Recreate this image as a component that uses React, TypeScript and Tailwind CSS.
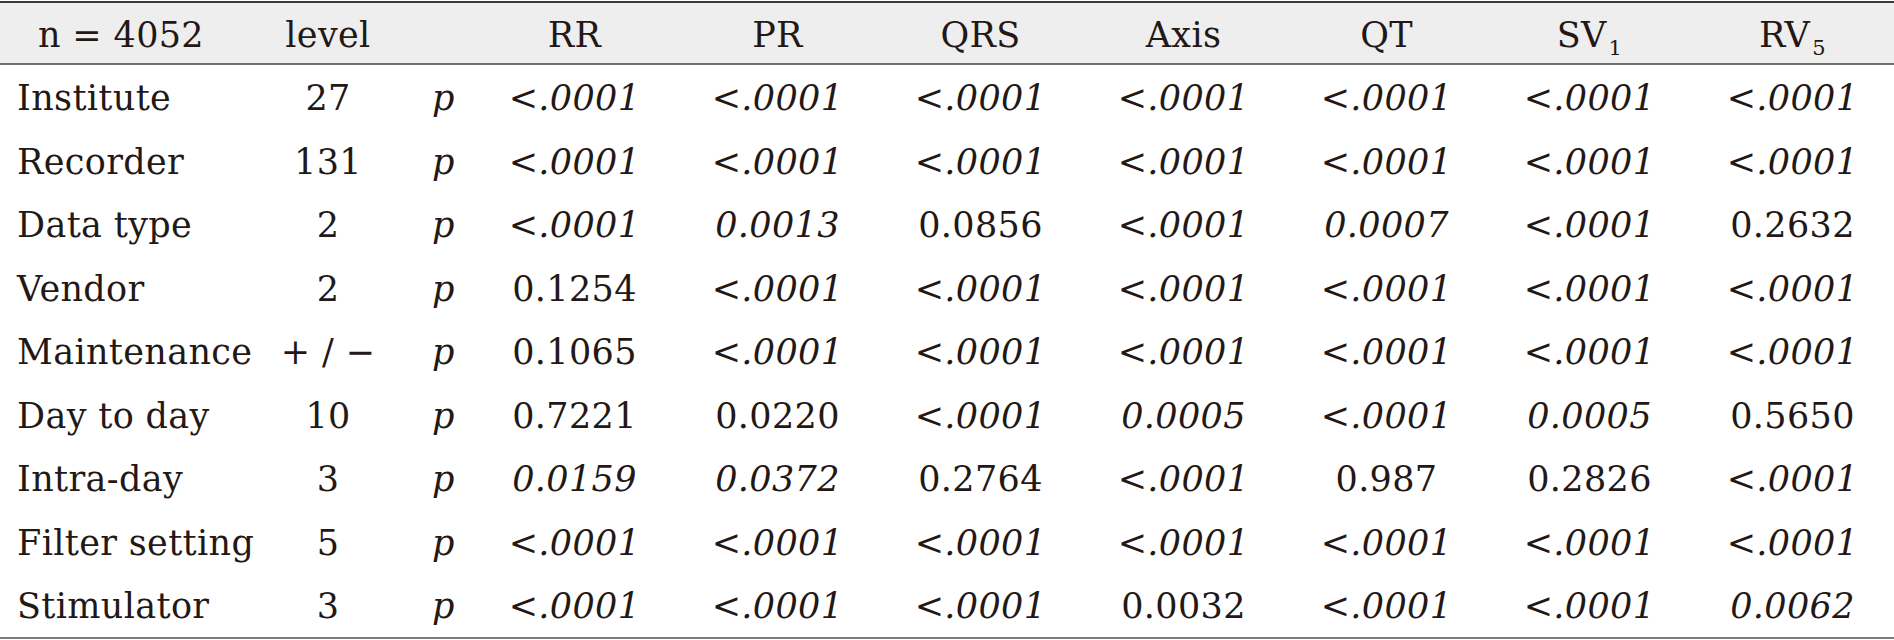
import React from 'react'

type Row = {
  label: string
  level: string
  values: string[]
  upright?: number[]
}

const LT = '<.0001'

const ROWS: Row[] = [
  { label: 'Institute', level: '27', values: [LT, LT, LT, LT, LT, LT, LT] },
  { label: 'Recorder', level: '131', values: [LT, LT, LT, LT, LT, LT, LT] },
  { label: 'Data type', level: '2', values: [LT, '0.0013', '0.0856', LT, '0.0007', LT, '0.2632'], upright: [2, 6] },
  { label: 'Vendor', level: '2', values: ['0.1254', LT, LT, LT, LT, LT, LT], upright: [0] },
  { label: 'Maintenance', level: '+ / −', values: ['0.1065', LT, LT, LT, LT, LT, LT], upright: [0] },
  { label: 'Day to day', level: '10', values: ['0.7221', '0.0220', LT, '0.0005', LT, '0.0005', '0.5650'], upright: [0, 1, 6] },
  { label: 'Intra-day', level: '3', values: ['0.0159', '0.0372', '0.2764', LT, '0.987', '0.2826', LT], upright: [2, 4, 5] },
  { label: 'Filter setting', level: '5', values: [LT, LT, LT, LT, LT, LT, LT] },
  { label: 'Stimulator', level: '3', values: [LT, LT, LT, '0.0032', LT, LT, '0.0062'], upright: [3] },
]

function Sub({ children }: { children: React.ReactNode }) {
  return <span className="relative top-[8px] ml-[2px] text-[21px] leading-none">{children}</span>
}

const HEAD: React.ReactNode[] = [
  'RR',
  'PR',
  'QRS',
  'Axis',
  'QT',
  <>SV<Sub>1</Sub></>,
  <>RV<Sub>5</Sub></>,
]

export default function App() {
  return (
    <div className="min-h-screen bg-white pt-px font-['DejaVu_Serif',serif] text-[35px] leading-none tracking-[0.01em] text-[#231815]">
      {/* header */}
      <div className="flex h-[64px] items-center border-y-2 border-t-[#3a3a3a] border-b-[#6e6e6e] bg-[#eeeeee] pt-[4px]">
        <div className="w-[242px] text-center">n = 4052</div>
        <div className="w-[172px] text-center">level</div>
        <div className="w-[59px]" />
        {HEAD.map((h, i) => (
          <div key={i} className="w-[203px] text-center">{h}</div>
        ))}
      </div>

      {/* body */}
      <div className="border-b-2 border-[#7d7d7d]">
        {ROWS.map((row) => (
          <div key={row.label} className="flex h-[63.5px] items-center pt-[4px]">
            <div className="w-[242px] whitespace-nowrap pl-[17px]">{row.label}</div>
            <div className="w-[172px] whitespace-nowrap text-center">{row.level}</div>
            <div className="w-[59px] text-center italic">p</div>
            {row.values.map((v, i) => (
              <div
                key={i}
                className={`w-[203px] text-center ${row.upright?.includes(i) ? '' : 'italic'}`}
              >
                {v}
              </div>
            ))}
          </div>
        ))}
      </div>
    </div>
  )
}
